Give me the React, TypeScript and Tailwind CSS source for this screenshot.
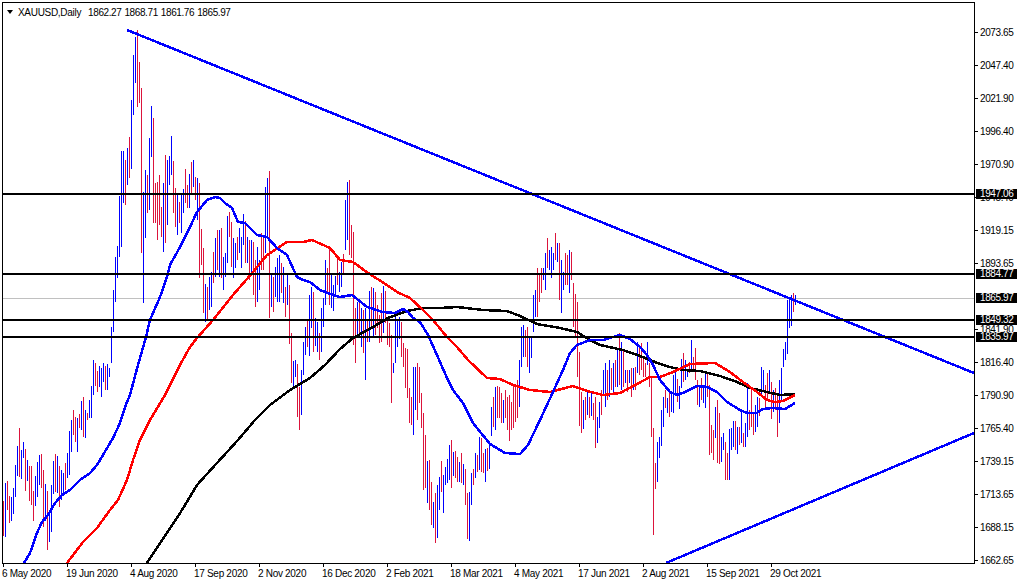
import React from 'react';

// [high y, low y, 1 = up bar] for every bar, 2px apart starting at x = 3
const bars: number[][] = [
  [501,536,0],[483,537,1],[481,510,0],[496,523,0],[497,521,1],[488,514,1],[465,497,1],[446,476,1],[428,477,0],[450,479,1],
  [442,458,1],[449,491,0],[460,481,1],[466,501,0],[466,505,0],[491,521,0],[476,506,1],[462,497,1],[455,485,1],[454,488,0],
  [470,527,0],[484,521,1],[491,550,0],[510,542,1],[485,532,1],[461,494,1],[454,492,0],[456,493,1],[466,507,0],[470,500,1],
  [473,493,1],[463,490,0],[453,478,1],[431,475,1],[420,452,1],[410,435,0],[417,442,0],[418,452,1],[414,428,0],[401,430,1],
  [397,437,0],[410,438,1],[413,420,0],[400,418,1],[386,418,1],[360,395,1],[363,386,0],[371,392,0],[366,387,1],[368,397,1],
  [363,382,1],[366,390,0],[364,390,1],[368,377,1],[327,363,1],[290,332,1],[257,302,1],[246,278,1],[196,257,1],[151,247,1],
  [151,203,1],[160,205,0],[148,185,1],[137,178,0],[100,169,1],[55,115,1],[37,83,1],[30,107,0],[62,103,0],[88,253,0],
  [192,303,1],[170,238,1],[175,213,0],[138,210,1],[106,157,1],[118,223,0],[183,223,0],[182,240,0],[175,225,0],[207,237,0],
  [183,252,1],[155,243,0],[160,225,1],[156,185,1],[136,175,1],[161,213,0],[188,227,0],[193,235,1],[202,223,0],[193,233,1],
  [189,213,1],[169,203,0],[185,208,0],[174,208,1],[162,193,0],[160,187,1],[177,200,0],[178,220,1],[183,278,0],[229,265,0],
  [248,313,0],[284,322,1],[287,320,0],[277,310,1],[272,307,1],[252,283,0],[238,277,1],[230,270,0],[230,277,1],[228,278,0],
  [257,290,1],[253,277,1],[216,263,1],[212,237,0],[222,267,0],[238,278,1],[243,268,1],[237,260,0],[228,253,1],[237,268,1],
  [214,245,1],[221,263,0],[237,263,1],[240,280,0],[240,273,1],[242,295,0],[260,307,0],[247,302,1],[260,290,1],[233,270,0],
  [235,270,0],[187,253,1],[178,237,1],[171,318,0],[275,307,1],[277,312,0],[267,297,1],[258,302,1],[255,302,1],[263,293,0],
  [267,303,1],[287,317,0],[273,305,1],[285,344,0],[333,383,0],[361,386,1],[360,377,1],[364,417,0],[387,430,0],[370,415,1],
  [342,375,1],[327,355,1],[320,347,0],[295,356,1],[287,328,1],[292,352,0],[318,346,1],[322,352,1],[333,360,0],[308,352,1],
  [298,327,1],[260,305,1],[268,293,0],[246,305,0],[273,308,1],[285,311,1],[276,297,1],[255,285,0],[272,292,1],[262,287,1],
  [254,273,0],[200,250,1],[182,240,1],[180,255,0],[225,258,0],[232,345,0],[308,363,0],[302,337,1],[302,337,0],[308,347,1],
  [310,353,0],[308,380,1],[320,342,0],[291,342,1],[287,327,0],[288,337,1],[292,335,0],[305,328,0],[315,343,0],[293,342,0],
  [286,333,1],[291,323,0],[317,345,0],[323,347,0],[335,403,0],[363,373,1],[317,363,1],[320,347,1],[317,339,1],[322,357,0],
  [343,367,0],[348,388,0],[349,398,0],[388,423,0],[397,425,0],[367,435,1],[367,410,1],[363,420,0],[367,403,0],[393,428,0],
  [413,490,0],[435,488,0],[461,503,1],[460,510,0],[482,525,0],[502,528,1],[493,543,0],[485,538,1],[477,510,1],[461,492,0],
  [475,513,1],[467,485,1],[459,483,1],[445,480,1],[440,488,0],[452,476,1],[451,478,0],[457,482,0],[462,482,1],[453,483,0],
  [464,485,1],[469,505,0],[493,539,0],[492,541,1],[473,505,1],[469,485,0],[453,478,1],[455,472,0],[437,470,1],[438,472,0],
  [453,473,0],[449,482,1],[448,471,0],[443,469,1],[407,436,1],[397,427,0],[387,430,1],[386,418,0],[387,418,0],[393,423,0],
  [400,423,1],[390,418,0],[397,430,0],[395,441,0],[402,430,0],[385,428,0],[387,422,0],[380,418,0],[360,407,1],[327,367,1],
  [325,357,1],[330,357,0],[327,367,0],[337,373,1],[337,358,1],[295,332,1],[290,317,1],[268,317,0],[273,302,0],[268,293,0],
  [268,280,1],[253,290,1],[238,268,0],[250,270,1],[247,278,1],[253,270,1],[233,260,0],[243,262,1],[243,300,0],[260,313,1],
  [272,290,1],[253,285,0],[255,285,0],[250,293,1],[252,280,0],[283,327,0],[294,337,0],[302,377,0],[352,426,0],[392,433,0],
  [400,429,1],[397,420,0],[390,415,1],[397,418,0],[393,416,1],[403,420,0],[397,448,0],[417,443,1],[402,428,1],[390,415,0],
  [370,395,1],[363,407,1],[370,400,0],[360,397,1],[368,390,0],[363,393,1],[360,387,0],[348,387,1],[333,385,0],[342,390,1],
  [350,387,0],[370,383,1],[370,392,0],[370,383,1],[368,397,0],[368,390,1],[367,390,0],[342,373,1],[345,375,0],[343,370,0],
  [357,377,0],[363,377,0],[342,365,1],[363,387,0],[377,437,0],[428,535,0],[463,489,0],[442,482,1],[437,458,1],[410,446,1],
  [397,427,1],[390,408,0],[398,413,1],[392,417,0],[393,412,1],[375,413,1],[372,395,1],[379,402,0],[386,409,1],[359,388,1],
  [353,382,0],[360,380,1],[372,377,1],[362,373,0],[340,372,1],[357,372,0],[348,380,0],[380,405,0],[385,407,1],[378,400,0],
  [385,403,1],[372,408,1],[372,397,0],[385,455,0],[425,453,0],[430,460,0],[407,438,1],[400,463,0],[413,464,0],[437,462,1],
  [433,450,1],[442,480,0],[453,480,0],[429,480,1],[428,450,1],[421,447,1],[421,450,0],[427,454,1],[427,445,0],[410,443,1],
  [433,447,0],[423,447,1],[383,437,1],[410,430,0],[388,427,0],[412,435,0],[405,432,1],[397,427,1],[398,416,0],[367,395,1],
  [370,390,1],[385,407,0],[373,400,0],[370,392,1],[382,419,0],[390,412,1],[388,410,0],[393,437,0],[380,423,1],[368,402,1],
  [349,367,1],[342,360,1],[300,354,1],[300,328,1],[295,326,1],[293,312,0],[295,305,1],
];

const maBlue = '24,563 30,553 37,533 42,522 48,515 55,503 62,495 70,490 80,480 90,473 97,465 103,455 113,438 120,423 125,407 130,395 138,365 146,337 150,320 160,297 167,277 170,265 180,247 190,227 197,212 207,200 215,197 220,198 225,203 232,208 238,222 245,223 257,235 267,237 277,248 287,255 297,277 303,280 310,282 320,290 333,295 340,297 352,295 367,307 383,312 395,313 403,309 408,312 413,318 420,322 428,335 437,355 447,378 453,390 463,403 473,423 490,444 505,453 520,454 528,445 540,420 553,392 563,370 570,353 577,345 590,340 603,340 620,335 630,339 640,347 647,355 653,365 660,380 670,392 677,395 685,392 697,386 707,387 717,392 727,402 740,410 747,413 757,413 763,409 773,408 785,409 795,403';
const maRed = '67,563 83,542 97,528 110,510 118,500 127,480 133,460 140,440 150,420 165,395 180,365 190,347 197,338 213,320 233,295 253,272 267,255 287,242 303,242 312,240 330,248 340,260 353,262 368,273 387,285 397,292 410,298 423,310 433,320 447,337 457,347 468,360 487,378 500,379 513,385 530,390 550,392 573,386 587,391 603,395 620,393 637,384 650,377 660,377 673,372 690,364 715,363 730,372 743,382 757,392 767,400 775,402 783,401 795,395';
const maBlack = '147,563 167,533 182,510 197,485 217,463 238,440 255,420 270,405 290,390 310,378 325,365 340,349 353,338 373,327 388,318 407,311 423,308 440,308 457,307 483,310 507,311 520,316 537,324 560,328 577,332 590,340 600,345 623,350 640,356 660,364 670,367 683,370 700,371 720,376 737,382 750,388 767,392 780,395 795,394';

const levels = [
  { y: 193, label: '1947.06' },
  { y: 273, label: '1884.77' },
  { y: 319, label: '1849.32' },
  { y: 336, label: '1835.97' },
];

const priceTicks = [
  ['2073.65', 32], ['2047.40', 65], ['2021.90', 98], ['1996.40', 131], ['1970.90', 164], ['1945.40', 197],
  ['1919.15', 230], ['1893.65', 263], ['1841.90', 329], ['1816.40', 362], ['1790.90', 395],
  ['1765.40', 428], ['1739.15', 461], ['1713.65', 494], ['1688.15', 527], ['1662.65', 560],
] as const;

const dates = [
  '6 May 2020', '19 Jun 2020', '4 Aug 2020', '17 Sep 2020', '2 Nov 2020', '16 Dec 2020', '2 Feb 2021',
  '18 Mar 2021', '4 May 2021', '17 Jun 2021', '2 Aug 2021', '15 Sep 2021', '29 Oct 2021',
];

// y is the centre of the tag in page pixels, the axis column starts at y = 2
const PriceTag: React.FC<{ y: number; label: string }> = ({ y, label }) => (
  <div
    className="absolute left-px w-[41px] h-[10px] bg-black text-white pl-1 leading-[10px]"
    style={{ top: y - 7 }}
  >
    {label}
  </div>
);

export default function App() {
  return (
    <div
      className="w-[1020px] h-[584px] bg-white text-black text-[10px] tracking-[-0.3px] overflow-hidden flex flex-col pt-[2px] pl-[2px]"
      style={{ fontFamily: '"Liberation Sans", sans-serif' }}
    >
      <div className="flex h-[562px] shrink-0">
        <div className="relative w-[972px] border-l border-t border-b border-black">
          <svg width={971} height={560} viewBox="3 3 971 560" className="block" shapeRendering="crispEdges">
            <rect x={3} y={298} width={971} height={1} fill="#c0c0c0" />
            {bars.map((b, i) => (
              <rect key={i} x={3 + i * 2} y={b[0]} width={1} height={b[1] - b[0]} fill={b[2] ? '#0000ff' : '#dc143c'} />
            ))}
            <polyline points={maBlack} fill="none" stroke="#000000" strokeWidth={2.5} />
            <polyline points={maRed} fill="none" stroke="#ff0000" strokeWidth={2.5} />
            <polyline points={maBlue} fill="none" stroke="#0000ff" strokeWidth={2.5} />
            <line x1={127} y1={30} x2={974} y2={373} stroke="#0000ff" strokeWidth={2.5} />
            <line x1={666} y1={563} x2={974} y2={433} stroke="#0000ff" strokeWidth={2.5} />
            {levels.map((l) => (
              <rect key={l.label} x={3} y={l.y} width={971} height={2} fill="#000000" />
            ))}
          </svg>
          <div className="absolute left-1 top-[2px] flex items-center h-[14px]">
            <svg width={6} height={4} viewBox="0 0 6 4" className="mr-[5px]">
              <polygon points="0,0 6,0 3,4" fill="#000000" />
            </svg>
            <span className="mr-[7px]">XAUUSD,Daily</span>
            <span className="flex gap-[3px] tracking-[-0.4px]">
              <span>1862.27</span>
              <span>1868.71</span>
              <span>1861.76</span>
              <span>1865.97</span>
            </span>
          </div>
        </div>

        <div className="relative w-[46px] border-l border-black tracking-[-0.4px]">
          {priceTicks.map(([label, y]) => (
            <div key={label} className="absolute left-0 flex items-center h-[10px]" style={{ top: y - 7 }}>
              <span className="w-[3px] h-px bg-black mr-[2px]" />
              {label}
            </div>
          ))}
          {levels.map((l) => (
            <PriceTag key={l.label} y={l.y + 1} label={l.label} />
          ))}
          <PriceTag y={298} label="1865.97" />
        </div>
      </div>

      <div className="flex">
        {dates.map((d) => (
          <div key={d} className="w-[64px] shrink-0">
            <div className="ml-px w-px h-[3px] bg-black" />
            <div className="whitespace-nowrap leading-[12px] mt-[1px]">{d}</div>
          </div>
        ))}
      </div>
    </div>
  );
}
